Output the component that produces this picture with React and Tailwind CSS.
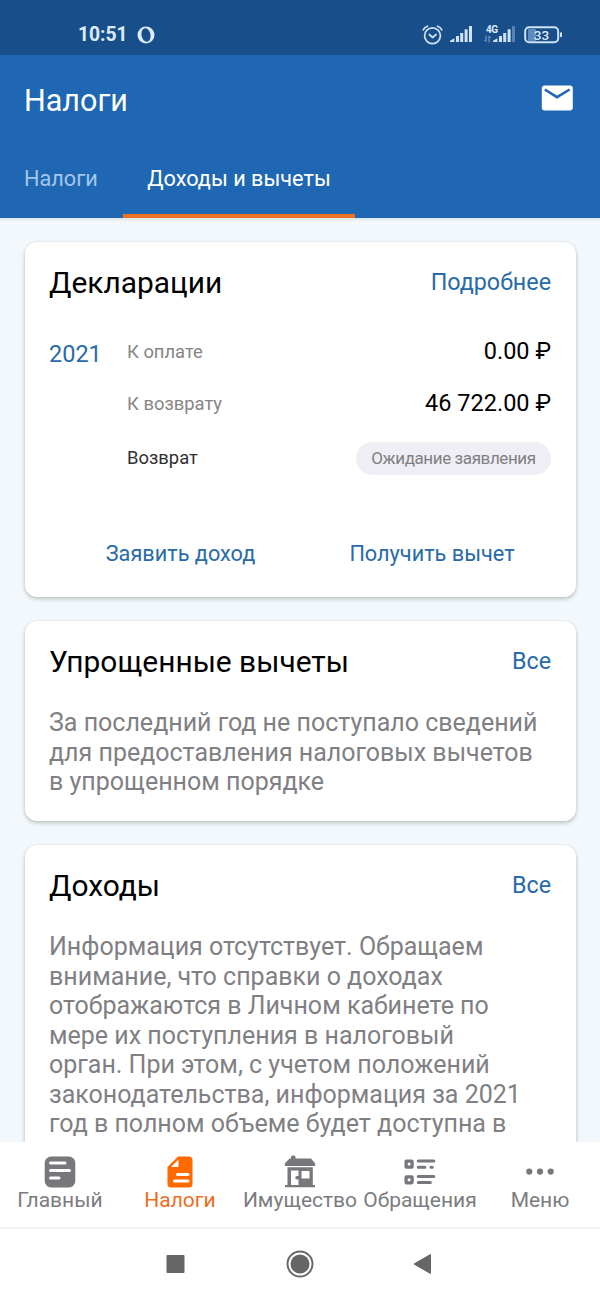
function SignalIcon({ faded }) {
  return (
    <svg width="24" height="17" viewBox="0 0 24 17" fill="#cfe2f7">
      <path d="M0 17v-1.2L4.4 13.2V17z" />
      <rect x="6" y="11" width="3" height="6" />
      <rect x="10.2" y="8" width="3" height="9" />
      <rect x="14.6" y="4.300" width="3" height="12.700" />
      <rect x="19" y="1" width="3" height="16" opacity={faded ? 0.35 : 1} />
    </svg>
  );
}

function StatusBar() {
  return (
    <div className="flex h-[55px] shrink-0 items-start bg-[#184f8b] pl-[78px] pt-[22px] text-[#dcebfb]">
      <span className="h-6 w-[59px] text-[19.300px] leading-[26px] font-bold whitespace-nowrap">10:51</span>
      <svg className="mt-[4px]" width="18" height="18" viewBox="0 0 18 18">
        <circle cx="9" cy="9" r="8.500" fill="#dcebfb" />
        <ellipse cx="9" cy="9" rx="4.500" ry="6.900" transform="rotate(-10 9 9)" fill="#184f8b" />
      </svg>
      <div className="ml-[267px] flex">
        <svg className="mt-[3px]" width="21" height="20" viewBox="0 0 21 20" fill="none" stroke="#cfe2f7" strokeWidth="1.7" strokeLinecap="round" strokeLinejoin="round">
          <circle cx="10.500" cy="10.800" r="7.900" />
          <path d="M7.300 9.500l3.300 3l3.500-3M1.200 4.800Q2.500 2 5.500 1.200M19.800 4.800Q18.500 2 15.500 1.200" />
        </svg>
        <div className="mt-[3px] ml-[7px]"><SignalIcon /></div>
        <div className="relative mt-[3px] ml-[19px]">
          <SignalIcon faded />
          <span className="absolute -left-[7px] -top-[1px] text-[10px] leading-[11px] font-bold tracking-[-0.5px]">4G</span>
          <svg className="absolute -left-[9px] top-[10px]" width="7" height="8" viewBox="0 0 7 8" fill="none" stroke="#7fa5cf" strokeWidth="1">
            <path d="M2 0.500V6.500L0.300 4.800M5 7.500V1L6.700 2.800" />
          </svg>
        </div>
        <div className="relative mt-[4px] ml-[7px]">
          <svg width="39" height="18" viewBox="0 0 39 18">
            <rect x="4" y="3" width="8" height="12" rx="1" fill="#5f8cbd" />
            <rect x="1.200" y="1.200" width="33" height="15" rx="4" fill="none" stroke="#cfe2f7" strokeWidth="2" />
            <rect x="36" y="6.300" width="2" height="5" rx="1" fill="#cfe2f7" />
          </svg>
          <span className="absolute left-0 top-0 w-[35px] text-center text-[13.500px] leading-[18px] font-medium">33</span>
        </div>
      </div>
    </div>
  );
}

function Header() {
  return (
    <header className="flex h-[163px] shrink-0 flex-col bg-[#1f67b2] text-white">
      <div className="flex h-[90px] items-center justify-between pr-[27px] pl-6">
        <h1 className="pt-[2px] text-[30.500px] leading-[36px]">Налоги</h1>
        <svg className="-mt-1" width="32" height="26" viewBox="0 0 32 26">
          <rect x="0.800" y="0.500" width="31" height="25" rx="3" fill="#fff" />
          <path d="M3.800 4.500L16 12.200L28.600 4.500" fill="none" stroke="#1f67b2" strokeWidth="2.600" />
        </svg>
      </div>
      <nav className="flex h-[73px] text-[21.700px] leading-[28px]">
        <div className="w-[123px] pt-[20px] pl-6 text-[#a3c6ec]">Налоги</div>
        <div className="w-[232px] border-b-4 border-[#ee7025] pt-[20px] text-center whitespace-nowrap">Доходы и вычеты</div>
      </nav>
    </header>
  );
}

function Card({ title, action, className, children }) {
  return (
    <section className={"shrink-0 rounded-[12px] bg-white px-[24.500px] shadow-[0_2px_4px_rgba(0,0,0,0.22),0_0_2px_rgba(0,0,0,0.08)] " + className}>
      <div className="flex h-[59px] justify-between pt-[23px]">
        <h2 className="text-[29.900px] leading-[36px] text-black">{title}</h2>
        <a className="pt-px text-[23.300px] leading-[33px] text-[#286ba8]">{action}</a>
      </div>
      {children}
    </section>
  );
}

function Row({ label, className, children }) {
  return (
    <div className={"flex items-center justify-between " + className}>
      <span className="pl-px text-[18.400px]">{label}</span>
      {children}
    </div>
  );
}

const tabs = [
  {
    label: "Главный",
    icon: (
      <svg width="32" height="32" viewBox="0 0 32 32">
        <rect x="0.700" y="0.500" width="30.600" height="31" rx="6.500" fill="#77777c" />
        <path d="M6.500 7h14.500M6.500 14.500h19M6.500 22h8.500" stroke="#fff" strokeWidth="3" strokeLinecap="round" />
      </svg>
    ),
  },
  {
    label: "Налоги",
    active: true,
    icon: (
      <svg width="32" height="32" viewBox="0 0 32 32">
        <path d="M14 0.500H25a3.500 3.500 0 0 1 3.500 3.500V28a3.500 3.500 0 0 1-3.500 3.500H7A3.500 3.500 0 0 1 3.500 28V11z" fill="#ff6900" />
        <path d="M14.500 3.500V11H7z" fill="#fff" />
        <path d="M13.500 18.500h10.500M10.500 25h13.500" stroke="#fff" strokeWidth="3" strokeLinecap="round" />
      </svg>
    ),
  },
  {
    label: "Имущество",
    icon: (
      <svg width="32" height="34" viewBox="0 0 32 34">
        <path fillRule="evenodd" fill="#77777c" d="M5.500 4.500H7V3a1.500 1.500 0 0 1 1.500-1.500h1.500a1.500 1.500 0 0 1 1.500 1.500V4.500H27L31.200 9.500V12H0.800V9.500zM3.500 13.200H28.800V31H31V33.200H1V31H3.500zM7 16.500V31H14.500V25.500H13a1.500 1.500 0 0 1 0-3.500H14.500V16.500zM17.500 17V24.500H25.500V17z" />
      </svg>
    ),
  },
  {
    label: "Обращения",
    icon: (
      <svg width="32" height="32" viewBox="0 0 32 32" fill="none" stroke="#77777c" strokeWidth="3.300">
        <rect x="2.100" y="5.200" width="6" height="6" rx="0.500" />
        <rect x="2.100" y="20.800" width="6" height="6" rx="0.500" />
        <path d="M14.300 5h15.500M14.300 11.300h6.500M27 11.300h1.200M14.300 20.500h15.500M14.300 26.500h12" strokeLinecap="round" strokeWidth="3.100" />
      </svg>
    ),
  },
  {
    label: "Меню",
    icon: (
      <svg width="32" height="32" viewBox="0 0 32 32" fill="#77777c">
        <circle cx="5.300" cy="15.600" r="3.100" />
        <circle cx="16" cy="15.600" r="3.100" />
        <circle cx="26.700" cy="15.600" r="3.100" />
      </svg>
    ),
  },
];

export default function App() {
  return (
    <div className="flex h-[1299px] w-[600px] flex-col overflow-hidden bg-white font-[Roboto,sans-serif]">
      <StatusBar />
      <Header />
      <div className="h-1 shrink-0 bg-linear-to-b from-[#dfe6ea] to-[#f2f8fb]" />
      <main className="flex h-[920px] shrink-0 flex-col gap-6 overflow-hidden bg-[#f2f8fb] px-[24.500px] pt-5">
        <Card title="Декларации" action="Подробнее" className="h-[355px]">
          <div className="mt-[25px] flex">
            <div className="w-[77px] pt-[12px] text-[23.500px] leading-[32px] text-[#286ba8]">2021</div>
            <div className="flex-1">
              <Row label="К оплате" className="h-[52px] text-[#858585]">
                <span className="text-[23.500px] text-black">0.00 ₽</span>
              </Row>
              <Row label="К возврату" className="h-[52px] text-[#858585]">
                <span className="text-[23.500px] text-black">46 722.00 ₽</span>
              </Row>
              <Row label="Возврат" className="h-[56px] text-[#303030]">
                <span className="flex h-[33px] w-[195px] items-center justify-center rounded-full bg-[#efeef4] pt-px text-[17px] tracking-[-0.4px] text-[#808084]">Ожидание заявления</span>
              </Row>
            </div>
          </div>
          <div className="mt-[52px] flex text-[21.700px] leading-[32px] text-[#286ba8]">
            <div className="w-[263px] text-center">Заявить доход</div>
            <div className="w-[239px] pl-px text-center">Получить вычет</div>
          </div>
        </Card>
        <Card title="Упрощенные вычеты" action="Все" className="h-[200px]">
          <p className="mt-[28px] text-[25px] leading-[29.500px] whitespace-nowrap text-[#808084]">
            За последний год не поступало сведений<br />для предоставления налоговых вычетов<br />в упрощенном порядке
          </p>
        </Card>
        <Card title="Доходы" action="Все" className="h-[400px]">
          <p className="mt-[28px] text-[25px] leading-[29.500px] whitespace-nowrap text-[#808084]">
            Информация отсутствует. Обращаем<br />внимание, что справки о доходах<br />отображаются в Личном кабинете по<br />мере их поступления в налоговый<br />орган. При этом, с учетом положений<br />законодательства, информация за 2021<br />год в полном объеме будет доступна в
          </p>
        </Card>
      </main>
      <nav className="grid h-[87px] shrink-0 grid-cols-5 border-b-2 border-[#f3f3f3] bg-white pt-[14px]">
        {tabs.map((tab) => (
          <div key={tab.label} className={"flex flex-col items-center " + (tab.active ? "text-[#ec6e1e]" : "text-[#7c7c80]")}>
            <div className="flex h-[32px] items-end">{tab.icon}</div>
            <span className="text-[21px] leading-[24px] whitespace-nowrap">{tab.label}</span>
          </div>
        ))}
      </nav>
      <div className="flex h-[70px] shrink-0 items-center pl-[166px]">
        <svg width="268" height="30" viewBox="0 0 268 30" fill="#666">
          <rect x="0.500" y="6" width="18" height="18" rx="1" />
          <circle cx="134" cy="15" r="12.500" fill="none" stroke="#666" strokeWidth="2" />
          <circle cx="134" cy="15" r="9.500" />
          <path d="M248 15L264.500 5.500V24.500z" strokeLinejoin="round" stroke="#666" />
        </svg>
      </div>
    </div>
  );
}
